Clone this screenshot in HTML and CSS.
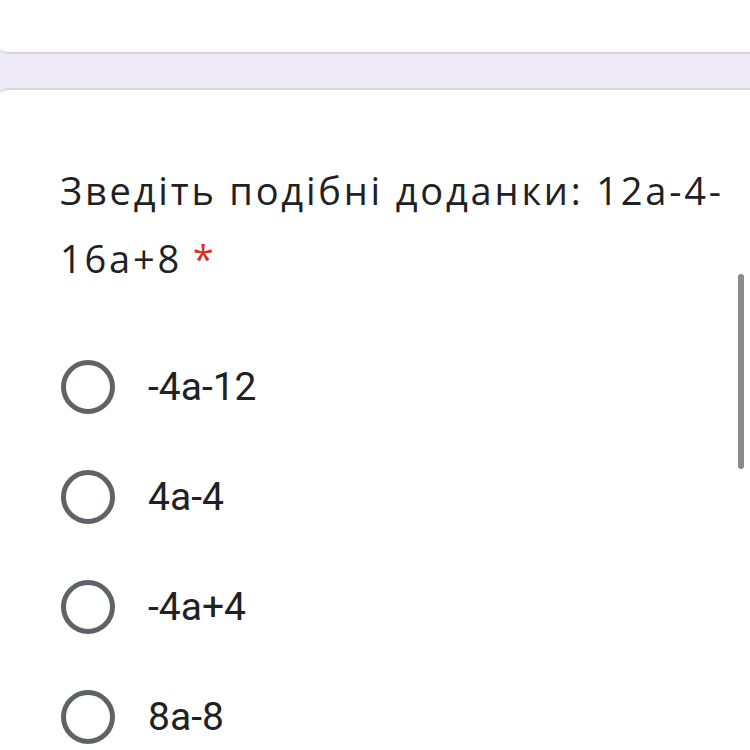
FILE: index.html
```html
<!DOCTYPE html>
<html lang="uk">
<head>
<meta charset="utf-8">
<link rel="stylesheet" href="styles.css">
</head>
<body>
<div class="page">
  <div class="top-card"></div>
  <div class="q-card">
    <div class="q-title">Зведіть подібні доданки: 12a-4-<br>16a+8 <span class="req">*</span></div>
    <div class="options">
      <div class="opt"><span class="radio"></span><span class="label">-4a-12</span></div>
      <div class="opt"><span class="radio"></span><span class="label">4a-4</span></div>
      <div class="opt"><span class="radio"></span><span class="label">-4a+4</span></div>
      <div class="opt"><span class="radio"></span><span class="label">8a-8</span></div>
    </div>
  </div>
  <div class="scrollbar"></div>
</div>
</body>
</html>
```
FILE: styles.css
```css
html, body {
  margin: 0;
  padding: 0;
  background: #eeebf6;
  overflow: hidden;
  height: 750px;
}
.page {
  position: relative;
  width: 750px;
  height: 750px;
  overflow: hidden;
}
.top-card {
  height: 52px;
  margin-left: -2px;
  margin-right: -20px;
  background: #fff;
  border-bottom: 2px solid #d6d5dc;
  border-radius: 0 0 10px 10px;
}
.q-card {
  margin-top: 34px;
  margin-left: -2px;
  margin-right: -20px;
  background: #fff;
  border-top: 2px solid #d6d5dc;
  border-radius: 10px 0 0 0;
  padding: 66px 0 0 62px;
  height: 700px;
}
.q-title {
  font-family: "Open Sans", Roboto, sans-serif;
  font-size: 38px;
  line-height: 68px;
  letter-spacing: 2.8px;
  color: #202124;
  white-space: nowrap;
}
.req {
  color: #d93025;
  margin-left: -2px;
}
.options {
  margin-top: 40px;
  display: flex;
  flex-direction: column;
}
.opt {
  height: 110px;
  display: flex;
  align-items: center;
}
.radio {
  width: 44px;
  height: 44px;
  border: 5px solid #5f6368;
  border-radius: 50%;
  box-sizing: content-box;
  margin-left: 1px;
  flex: none;
}
.label {
  margin-left: 33px;
  font-family: Roboto, sans-serif;
  font-size: 39px;
  color: #202124;
}
.scrollbar {
  position: absolute;
  left: 738px;
  top: 274px;
  width: 6px;
  height: 195px;
  border-radius: 3px;
  background: #8a8a8a;
}
```
